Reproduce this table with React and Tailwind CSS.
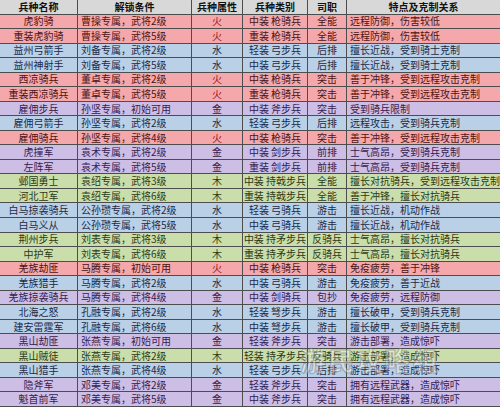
import React from "react";

const C = {
  r: "bg-[#f5a8ab] text-[#4a1414]",
  b: "bg-[#b9d0e7] text-[#1c2a48]",
  p: "bg-[#cdbee6] text-[#35204f]",
  g: "bg-[#cadeab] text-[#2a3a16]",
};

const rows = [
  ["虎豹骑", "曹操专属，武将2级", "火", "中装 枪骑兵", "全能", "远程防御，伤害较低", "r"],
  ["重装虎豹骑", "曹操专属，武将5级", "火", "重装 枪骑兵", "全能", "远程防御，伤害较低", "r"],
  ["益州弓箭手", "刘备专属，武将2级", "水", "轻装 弓步兵", "后排", "擅长近战，受到骑士克制", "b"],
  ["益州神射手", "刘备专属，武将5级", "水", "中装 弓步兵", "后排", "擅长近战，受到骑士克制", "b"],
  ["西凉骑兵", "董卓专属，武将2级", "火", "中装 枪骑兵", "突击", "善于冲锋，受到远程攻击克制", "r"],
  ["重装西凉骑兵", "董卓专属，武将5级", "火", "重装 枪骑兵", "突击", "善于冲锋，受到远程攻击克制", "r"],
  ["雇佣步兵", "孙坚专属，初始可用", "金", "中装 斧步兵", "突击", "受到骑兵限制", "p"],
  ["雇佣弓箭手", "孙坚专属，武将2级", "水", "轻装 弓步兵", "后排", "远程攻击，受到骑兵克制", "b"],
  ["雇佣骑兵", "孙坚专属，武将4级", "火", "中装 枪骑兵", "突击", "善于冲锋，受到远程攻击克制", "r"],
  ["虎撞军", "袁术专属，武将2级", "金", "中装 剑步兵", "前排", "士气高昂，受到骑兵克制", "p"],
  ["左阵军", "袁术专属，武将5级", "金", "重装 剑步兵", "前排", "士气高昂，受到骑兵克制", "p"],
  ["邺国勇士", "袁绍专属，武将3级", "木", "中装 持戟步兵", "全能", "擅长对抗骑兵，受到远程攻击克制", "g"],
  ["河北卫军", "袁绍专属，武将6级", "木", "重装 持戟步兵", "全能", "善于冲锋，擅长对抗骑兵", "g"],
  ["白马掠袭骑兵", "公孙瓒专属，武将2级", "水", "轻装 弓骑兵", "游击", "擅长近战，机动作战", "b"],
  ["白马义从", "公孙瓒专属，武将5级", "水", "中装 弓骑兵", "游击", "擅长近战，机动作战", "b"],
  ["荆州步兵", "刘表专属，武将3级", "木", "中装 持矛步兵", "反骑兵", "士气高昂，擅长对抗骑兵", "g"],
  ["中护军", "刘表专属，武将6级", "木", "重装 持矛步兵", "反骑兵", "士气高昂，擅长对抗骑兵", "g"],
  ["羌族劫匪", "马腾专属，初始可用", "火", "中装 枪骑兵", "突击", "免疫疲劳，善于冲锋", "r"],
  ["羌族猎手", "马腾专属，武将2级", "水", "中装 弓骑兵", "游击", "免疫疲劳，善于近战", "b"],
  ["羌族掠袭骑兵", "马腾专属，武将4级", "金", "中装 剑骑兵", "包抄", "免疫疲劳，远程防御", "p"],
  ["北海之怒", "孔融专属，武将2级", "水", "轻装 弩步兵", "游击", "擅长破甲，受到骑兵克制", "b"],
  ["建安雷霆军", "孔融专属，武将6级", "水", "中装 弩步兵", "游击", "擅长破甲，受到骑兵克制", "b"],
  ["黑山劫匪", "张燕专属，初始可用", "金", "轻装 斧步兵", "突击", "游击部署，造成惊吓", "p"],
  ["黑山贼徒", "张燕专属，武将2级", "木", "轻装 持矛步兵", "反骑兵", "游击部署，造成惊吓", "g"],
  ["黑山猎手", "张燕专属，武将4级", "水", "轻装 弓步兵", "后排", "游击部署，造成惊吓", "b"],
  ["隐斧军", "邓美专属，武将2级", "金", "轻装 斧步兵", "突击", "拥有远程武器，造成惊吓", "p"],
  ["魁首前军", "邓美专属，武将5级", "金", "中装 斧步兵", "突击", "拥有远程武器，造成惊吓", "p"],
];

const headers = ["兵种名称", "解锁条件", "兵种属性", "兵种类别", "司职", "特点及克制关系"];
const align = ["justify-center", "justify-start pl-[3px]", "justify-center", "justify-center", "justify-center", "justify-start pl-[3px]"];

export default function App() {
  return (
    <div className="relative w-[500px] h-[407px] overflow-hidden bg-white font-['Noto_Sans_CJK_SC','Noto_Sans',sans-serif]">
      <div className="grid w-[499px] h-[407px] grid-cols-[78px_114px_51px_65px_39px_1fr] grid-rows-[repeat(28,minmax(0,1fr))]">
        {headers.map((h, i) => (
          <div
            key={"h" + i}
            className="flex items-center justify-center border-r border-b border-[#4d4d4d] bg-[#d8d8d8] text-[10px] font-bold leading-[12px] text-[#111] whitespace-nowrap"
          >
            {h}
          </div>
        ))}
        {rows.map((r, ri) =>
          r.slice(0, 6).map((cell, ci) => (
            <div
              key={ri + "-" + ci}
              className={`flex items-center ${align[ci]} border-r border-b border-[#4d4d4d] ${C[r[6]]} text-[10px] leading-[12px] whitespace-nowrap ${ci === 2 && cell === "火" ? "text-[#9a2020]" : ""}`}
            >
              {cell}
            </div>
          ))
        )}
      </div>
      <div className="pointer-events-none absolute left-[300px] top-[340px] text-[26px] font-bold tracking-[2px] text-white/35 [-webkit-text-stroke:1px_rgba(90,90,90,0.4)] whitespace-nowrap">
        游民攻略组
      </div>
    </div>
  );
}
